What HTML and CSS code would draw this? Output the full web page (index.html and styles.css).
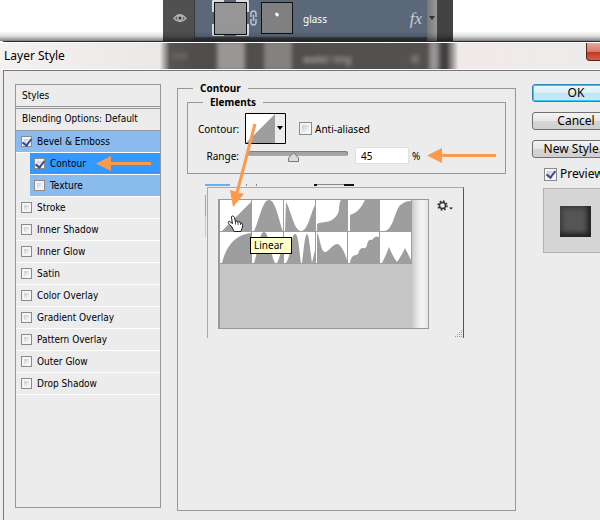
FILE: index.html
```html
<!DOCTYPE html>
<html lang="en">
<head>
<meta charset="utf-8">
<title>Layer Style</title>
<link rel="stylesheet" href="styles.css">
</head>
<body>
<div class="screen">
  <div class="backdrop">
    <div class="layers">
      <div class="eye-col">
        <svg width="14" height="10" viewBox="0 0 14 10"><path d="M1 5.5Q6.500 -2 13 5.500Q7 11.500 1 5.500Z" fill="#555" stroke="#b4b4b4" stroke-width="1.300"/><circle cx="7" cy="5" r="3" fill="#b4b4b4"/><circle cx="7" cy="5" r="1.500" fill="#333"/></svg>
      </div>
      <div class="layer">
        <svg class="thumbs" width="84" height="37" viewBox="0 0 84 37">
          <path d="M1 12V1H12M24 1H36V12M36 24V35H24M12 35H1V24" fill="none" stroke="#fff" stroke-width="1.500"/>
          <rect x="2.500" y="2.500" width="32" height="32" fill="#969696" stroke="#111"/>
          <g fill="none" stroke="#bcc3cc" stroke-width="1.500"><path d="M39 17v-3q0-3 2.500-3t2.500 3v3M39 19v3q0 3 2.500 3t2.500-3v-3M41.500 15v6"/></g>
          <rect x="49.500" y="2.500" width="31" height="31" fill="#808080" stroke="#111"/>
          <path d="M63 13.500l2-1 2 2-1 2-2-.5z" fill="#fff"/>
        </svg>
        <span class="layer-name">glass</span>
        <span class="fx">fx</span>
      </div>
      <div class="layer-scroll"><span></span></div>
    </div>
  </div>

  <div class="dialog">
    <header class="titlebar">
      <div class="ghost" aria-hidden="true">
        <i class="ghost-eye"></i><i class="ghost-thumb"></i><i class="ghost-mask"></i><b>water ring</b><i class="ghost-fx"></i><i class="ghost-bar"></i>
      </div>
      <h1>Layer Style</h1>
      <button class="close" aria-label="Close"></button>
    </header>

    <div class="body">
      <section class="styles">
        <h2>Styles</h2>
        <p>Blending Options: Default</p>
        <ul>
          <li class="on"><label><input type="checkbox" checked>Bevel &amp; Emboss</label></li>
          <li class="sub current"><label><input type="checkbox" checked>Contour</label>
            <svg class="arrow" width="55" height="15" viewBox="0 0 55 15"><path d="M0 7.500L15 0V6H55V9H15V15Z"/></svg></li>
          <li class="sub on"><label><input type="checkbox">Texture</label></li>
          <li><label><input type="checkbox">Stroke</label></li>
          <li><label><input type="checkbox">Inner Shadow</label></li>
          <li><label><input type="checkbox">Inner Glow</label></li>
          <li><label><input type="checkbox">Satin</label></li>
          <li><label><input type="checkbox">Color Overlay</label></li>
          <li><label><input type="checkbox">Gradient Overlay</label></li>
          <li><label><input type="checkbox">Pattern Overlay</label></li>
          <li><label><input type="checkbox">Outer Glow</label></li>
          <li><label><input type="checkbox">Drop Shadow</label></li>
        </ul>
      </section>

      <fieldset class="contour">
        <legend>Contour</legend>
        <fieldset class="elements">
          <legend>Elements</legend>
          <div class="row">
            <label class="name" for="curve">Contour:</label>
            <button class="curve" id="curve"><svg width="41" height="31" viewBox="0 0 41 31"><path d="M0 0H41V31H0Z" fill="#fff"/><path d="M30 0H41V31H30Z" fill="#ececec"/><path d="M1 30L30 1V30Z" fill="#9e9e9e"/><path d="M.5 .5H40.500V30.500H.5Z" fill="none" stroke="#000"/><path d="M32 13h6l-3 4z" fill="#000"/></svg></button>
            <label class="aa"><input class="big" type="checkbox">Anti-aliased</label>
          </div>
          <div class="row range">
            <label class="name" for="range">Range:</label>
            <input type="range" id="range" min="0" max="100" value="45">
            <input type="text" value="45" aria-label="Range percent">
            <span>%</span>
            <svg class="arrow" width="69" height="15" viewBox="0 0 69 15"><path d="M0 7.500L15 0V6H69V9H15V15Z"/></svg>
          </div>
        </fieldset>
        <div class="picker-anchor">
          <svg class="covered" width="160" height="56" viewBox="0 0 160 56"><path d="M0 0H25V2H0ZM0 11H1V32H0Z" fill="#67b0f5"/><path d="M0 32H1V53H0Z" fill="#a9cef0"/><path d="M41 0H42V2H41ZM51 0H52V2H51ZM109 0H139V1H109Z" fill="#888"/><path d="M109 0H112V2H109ZM139 0H149V2H139Z" fill="#111"/></svg>
          <div class="popup">
            <div class="picker">
              <div class="cells">
                <button aria-label="Linear"><svg viewBox="0 0 32 32"><path d="M2 31L31 2V31Z"/></svg></button>
                <button aria-label="Cone"><svg viewBox="0 0 32 32"><path d="M2 31C7 22 10 0 17 0S27 22 31 31Z"/></svg></button>
                <button aria-label="Cone inverted"><svg viewBox="0 0 32 32"><path d="M2 2C7 10 10 31 17 31S27 12 31 5V31H1Z"/></svg></button>
                <button aria-label="Cove deep"><svg viewBox="0 0 32 32"><path d="M1 24L3 23 9 22C16 22 22 16 23 10Q23 3 25 0H31V31H1Z"/></svg></button>
                <button aria-label="Cove shallow"><svg viewBox="0 0 32 32"><path d="M2 15C9 13 13 8 17 0H31V31H2Z"/></svg></button>
                <button aria-label="Gaussian"><svg viewBox="0 0 32 32"><path d="M4 31C14 31 15 6 22 4Q25 1 31 1V31Z"/></svg></button>
                <button aria-label="Half round"><svg viewBox="0 0 32 32"><path d="M2 31C6 15 14 3 31 1V31Z"/></svg></button>
                <button aria-label="Ring"><svg viewBox="0 0 32 32"><path d="M2 31C6 20 7 0 12 0C17 0 18 22 23 31H25Q28 25 31 13V31Z"/></svg></button>
                <button aria-label="Ring double"><svg viewBox="0 0 32 32"><path d="M2 31C8 22 7 2 11 2S15 20 17 31H18C20 15 21 2 23 2S26 18 28 31L31 18V31Z"/></svg></button>
                <button aria-label="Rolling slope"><svg viewBox="0 0 32 32"><path d="M1 0C5 10 5 20 9 20S16 12 22 12Q27 15 31 28V31H1Z"/></svg></button>
                <button aria-label="Rounded steps"><svg viewBox="0 0 32 32"><path d="M2 31Q3 23 8 23L10 22Q12 15 15 16T19 13Q20 7 24 8Q27 3 31 5V31Z"/></svg></button>
                <button aria-label="Sawtooth"><svg viewBox="0 0 32 32"><path d="M2 31Q7 21 9 15Q13 25 17 30Q22 23 25 16L31 28V31Z"/></svg></button>
              </div>
              <div class="picker-scroll"></div>
            </div>
            <button class="gear" aria-label="Picker menu"><svg width="16" height="12" viewBox="0 0 16 12"><circle cx="5.500" cy="5.500" r="4.200" fill="none" stroke="#333" stroke-width="2" stroke-dasharray="1.650 1.650"/><circle cx="5.500" cy="5.500" r="3" fill="none" stroke="#333" stroke-width="1.400"/><path d="M12 7.500h4l-2 2z" fill="#222"/></svg></button>
            <svg class="grip" width="9" height="9" viewBox="0 0 9 9"><path d="M7 1h1v1H7zM5 3h1v1H5zM7 3h1v1H7zM3 5h1v1H3zM5 5h1v1H5zM7 5h1v1H7zM1 7h1v1H1zM3 7h1v1H3zM5 7h1v1H5zM7 7h1v1H7z" fill="#999"/></svg>
            <div class="tip" role="tooltip">Linear</div>
            <svg class="pointer" width="30" height="102" viewBox="0 0 30 102"><path class="stroke" d="M25 2L7 71"/><path class="arrow" d="M3 85L0 68 14 72Z"/></svg>
            <svg class="hand" width="18" height="18" viewBox="0 0 18 18"><path d="M5 12L2.500 9.500Q.5 7.500 1.500 6.500T4 7.500L5.500 8.500 4.500 3Q4 1 5.500 1T7.500 2.500L8.500 7Q8.500 5.500 10 6L11 7.500Q11.500 6 13 7L13.500 8Q15 7.500 15.500 9T15 13.500L14 16.500H7Z" fill="#fff" stroke="#222"/><path d="M8.500 7v2.500M11 7.500v2.500M13.500 8v2" stroke="#222" stroke-width=".8"/></svg>
          </div>
        </div>
      </fieldset>

      <aside class="actions">
        <button class="ok">OK</button>
        <button>Cancel</button>
        <button>New Style...</button>
        <label><input class="big" type="checkbox" checked>Preview</label>
        <div class="preview"><div></div></div>
      </aside>
    </div>
  </div>
</div>
</body>
</html>
```
FILE: styles.css
```css
* { box-sizing: border-box; }
body {
  margin: 0;
  background: #fff;
  color: #000;
  font: 10px/12px "Noto Sans", "Open Sans", sans-serif;
}
h1, h2, p, ul, fieldset, legend { margin: 0; padding: 0; font-size: inherit; font-weight: 400; }
ul { list-style: none; }
button, input { font: inherit; color: inherit; margin: 0; }
button { padding: 0; border: 0; background: none; }
svg { display: block; }
.screen { min-height: 100vh; overflow: hidden; display: flex; flex-direction: column; }

/* Layers panel behind the dialog */
.backdrop { height: 41px; padding-left: 163px; position: relative; }
.backdrop::after {
  content: "";
  position: absolute;
  inset: 31px 0 0;
  background: linear-gradient(transparent, rgba(0, 0, 0, .12) 50%, rgba(0, 0, 0, .5));
}
.layers { width: 290px; height: 41px; display: flex; background: #434343; }
.eye-col { width: 32px; padding: 13px 0 0 10px; background: #505050; border-right: 1px solid #3c3c3c; }
.layer {
  width: 232px;
  height: 38px;
  padding: 0 5px 0 17px;
  display: flex;
  align-items: center;
  color: #fff;
  background: #5a687a;
  border-bottom: 1px solid #3e4855;
}
.layer-name { margin-left: 7px; flex: 1; }
.fx { font: italic 17px/20px "Liberation Serif", serif; color: #c8ccd2; }
.layer-scroll { width: 10px; background: linear-gradient(90deg, #777, #9a9a9a); padding: 16px 2px; }
.layer-scroll span { display: block; border: 3px solid transparent; border-top: 4px solid #333; }

/* Dialog frame */
.dialog {
  flex: 1;
  margin-right: -20px;
  display: flex;
  flex-direction: column;
  background: #f0eceb;
  border-top: 1px solid #2a2a2a;
  border-top-left-radius: 5px;
}
.titlebar {
  position: relative;
  height: 28px;
  padding-left: 4px;
  display: flex;
  justify-content: space-between;
  border-top: 1px solid #fff;
  border-bottom: 1px solid #fff;
  background: linear-gradient(90deg, #f4f1f0, #ece8e8 25%, #f1eae9 80%, #eeeceb 85%, #ececec);
}
h1 { position: relative; font-size: 12px; line-height: 26px; }
.close {
  position: relative;
  width: 34px;
  height: 18px;
  border: 1px solid #5a1f18;
  border-top: 0;
  border-radius: 0 0 4px 4px;
  background: linear-gradient(#e8a89b, #d8796a 50%, #bd3520 51%, #d4604a);
}
.ghost {
  position: absolute;
  left: 160px;
  top: 0;
  width: 298px;
  height: 26px;
  padding-left: 3px;
  display: flex;
  align-items: center;
  overflow: hidden;
  background: linear-gradient(90deg, #e8e4e3, #575454 10px, #4f4c4c 36px, #545151 262px, #464444 280px, #403e3e 286px, #e8e4e3);
}
.ghost > * { filter: blur(2px); }
.ghost b { color: #c4c0c0; font-weight: 400; width: 108px; padding-top: 6px; }
.ghost-eye { width: 14px; height: 6px; margin: 0 30px 0 10px; background: #686464; }
.ghost-thumb { width: 28px; height: 30px; background: #9a9696; }
.ghost-mask { width: 28px; height: 30px; margin: 0 11px 0 19px; background: #858181; }
.ghost-fx { width: 8px; height: 8px; margin: 6px 10px 0 0; background: #757171; }
.ghost-bar { width: 10px; height: 30px; background: #989494; }

.body {
  flex: 1;
  margin-left: 3px;
  padding: 11px 0 9px 11px;
  display: grid;
  grid-template-columns: 146px minmax(0, 1fr) 88px;
  gap: 16px;
  background: #ececec;
  border: 1px solid #777;
  border-width: 1px 0 0 1px;
}

/* Effects list */
.styles { margin: 2px 0 3px; border: 1px solid #979797; font-family: "DejaVu Sans Condensed", "Noto Sans", sans-serif; }
.styles h2 { height: 24px; padding-left: 6px; line-height: 22px; border-bottom: 3px double #979797; }
.styles p { height: 22px; padding-left: 6px; line-height: 20px; border-bottom: 1px solid #979797; white-space: nowrap; }
.styles li { height: 22px; padding-left: 5px; display: flex; align-items: center; border-bottom: 1px solid #fff; }
.styles label { display: flex; align-items: center; gap: 5px; }
.styles .sub { margin-left: 14px; padding-left: 4px; }
.styles .on { background: #8abbef; }
.styles .current { background: #3399ff; justify-content: space-between; padding-right: 9px; }
.arrow { fill: #fb9a4c; }

input[type="checkbox"] {
  appearance: none;
  width: 11px;
  height: 11px;
  border: 1px solid #8b8b8b;
  background: linear-gradient(135deg, #c9cbce, #fafafa) 2px 2px / 5px 5px no-repeat #f4f4f4;
}
input.big { width: 13px; height: 13px; background-size: 7px 7px; }
input[type="checkbox"]:checked::after {
  content: "";
  display: block;
  width: 4px;
  height: 7px;
  margin: 0 auto;
  border: solid #3b4d96;
  border-width: 0 2px 2px 0;
  transform: rotate(38deg);
}

/* Contour settings */
fieldset { border: 1px solid #979797; min-width: 0; }
legend { padding: 0 7px; font-weight: 700; }
.contour { padding: 2px 9px 9px; }
.contour > legend { margin-left: 6px; }
.elements { padding: 5px 7px 9px 10px; }
.elements > legend { margin-left: 5px; }
.row { display: flex; align-items: center; gap: 6px; }
.name { width: 41px; text-align: right; white-space: nowrap; }
.aa { display: flex; align-items: center; gap: 3px; margin-left: 7px; }
.range { margin-top: 3px; gap: 7px; }
input[type="range"] {
  appearance: none;
  width: 102px;
  height: 17px;
  margin: 0;
  padding: 0 0 4px 2px;
  background: none;
}
input[type="range"]::-webkit-slider-runnable-track {
  height: 5px;
  border: 1px solid #7d7d7d;
  border-bottom-color: #aaa;
  border-radius: 3px;
  background: #a5a5a5;
}
input[type="range"]::-webkit-slider-thumb {
  appearance: none;
  width: 11px;
  height: 10px;
  border: 0;
  border-radius: 0;
  background: url("data:image/svg+xml,%3Csvg xmlns='http://www.w3.org/2000/svg' width='11' height='10'%3E%3Cpath d='M5.5 .7L10.500 6V9.500H.5V6Z' fill='%23dcdcdc' stroke='%23777'/%3E%3C/svg%3E") no-repeat;
}
input[type="text"] { width: 54px; height: 17px; padding: 0 5px; border: 1px solid #e0e0e0; background: #fff; }
.range span { margin-left: -4px; }

/* Curve picker */
.picker-anchor { position: relative; }
.covered { margin: 10px 0 0 18px; }
.popup {
  position: absolute;
  left: 20px;
  top: 3px;
  width: 257px;
  height: 151px;
  padding: 11px 11px 9px 10px;
  display: flex;
  gap: 8px;
  background: #ececec;
  border: 1px solid #aaa;
  border-width: 1px 1px 0 1px;
  border-right-color: #555;
}
.picker {
  width: 211px;
  height: 130px;
  display: flex;
  flex: none;
  background: #c6c6c6;
  border: 1px solid #999;
  border-width: 1px 1px 1px 2px;
}
.cells { display: grid; grid-template-columns: repeat(6, 32px); grid-auto-rows: 32px; }
.cells button { width: 32px; height: 32px; background: #fff; border: solid #9e9e9e; border-width: 0 1px 1px 0; overflow: hidden; }
.cells svg { width: 32px; height: 32px; fill: #9e9e9e; }
.picker-scroll { flex: 1; background: linear-gradient(90deg, #c8c8c8, #e4e4e4 30%, #f4f4f4 60%, #e6e6e6); }
.gear { align-self: flex-start; margin-top: 1px; }
.grip { position: absolute; right: 0; bottom: 0; }
.tip {
  position: absolute;
  left: 42px;
  top: 49px;
  width: 42px;
  height: 17px;
  padding-left: 3px;
  line-height: 14px;
  background: #ffffcc;
  border: 1px solid #000;
}
.pointer { position: absolute; left: 22px; top: -66px; }
.pointer .stroke { stroke: #fb9a4c; stroke-width: 3; }
.hand { position: absolute; left: 19px; top: 27px; }

/* Right-hand buttons */
.actions { padding-top: 2px; display: flex; flex-direction: column; align-items: stretch; font-size: 12px; line-height: 16px; }
.actions button {
  height: 18px;
  margin-bottom: 10px;
  line-height: 16px;
  border: 1px solid #707070;
  border-radius: 3px;
  background: linear-gradient(#f4f4f4, #e6e6e6 48%, #d6d6d6 50%, #cfcfcf);
}
.actions .ok {
  border-color: #2c86b6;
  box-shadow: inset 0 0 0 1px #35c8f5;
  background: linear-gradient(#eaf6fb, #d9f0fa 48%, #bfe3f3 50%, #c9e9f6);
}
.actions label { display: flex; align-items: center; gap: 3px; margin: -2px 0 0 12px; }
.preview {
  width: 66px;
  height: 65px;
  margin: 6px 0 0 11px;
  padding: 17px 16px;
  background: #d5d5d5;
  border: 1px solid #b0b0b0;
}
.preview div {
  width: 31px;
  height: 31px;
  background: #555;
  box-shadow: inset -4px -4px 5px #222, inset 3px 3px 4px #404040;
}
```
